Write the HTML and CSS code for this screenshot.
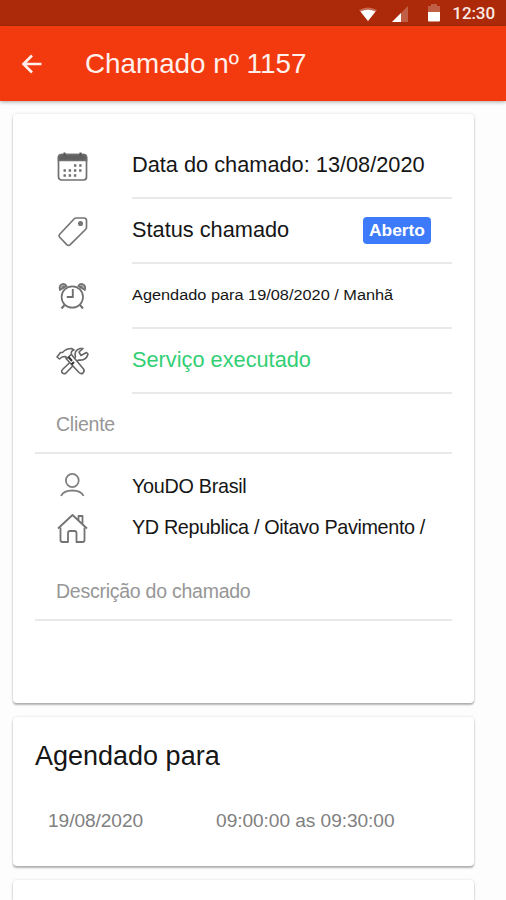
FILE: index.html
```
<!DOCTYPE html>
<html lang="pt-BR">
<head>
    <meta charset="UTF-8">
    <meta name="viewport" content="width=device-width, initial-scale=1.0">
    <title>Chamado nº 1157</title>
    <link rel="stylesheet" href="styles.css">
</head>
<body>
    <!-- Status bar -->
    <div class="status-bar">
        <svg class="wifi" width="20" height="18" viewBox="0 0 20 18">
            <path d="M1 4Q10-1 19 4L10 15Z" fill="#fff" opacity=".3"/>
            <path d="M2.500 5.500Q10 2 17.500 5.500L10 15Z" fill="#fff"/>
        </svg>
        <svg class="signal" width="17" height="18" viewBox="0 0 17 18">
            <path d="M0 16L16 0V16Z" fill="#fff" opacity=".25"/>
            <path d="M0 16L9 7V16Z" fill="#fff"/>
        </svg>
        <svg class="battery" width="12" height="18" viewBox="0 0 12 18">
            <path d="M0 2H3V0H9V2H12V9H0Z" fill="#fff" opacity=".25"/>
            <path d="M0 8H12V16.500Q12 17.500 11 17.500H1Q0 17.500 0 16.500Z" fill="#fff"/>
        </svg>
        <span class="time">12:30</span>
    </div>

    <!-- Header -->
    <header class="toolbar">
        <svg class="back" width="22" height="20" viewBox="0 0 22 20" fill="none" stroke="#ffeee9" stroke-width="2.7">
            <path d="M20.500 10H2.500M11 1.500L2.500 10L11 18.500"/>
        </svg>
        <h1>Chamado nº 1157</h1>
    </header>

    <main class="content">
        <div class="card card-details">
            <div class="item">
                <svg class="icon" width="34" height="34" viewBox="0 0 34 34" fill="none" stroke="#707070" stroke-width="1.7">
                    <rect x="3.500" y="4.500" width="28" height="25.500" rx="3"/>
                    <path d="M3.500 10.500V7.500Q3.500 4.500 6.500 4.500H28.500Q31.500 4.500 31.500 7.500V10.500Z" fill="#606060"/>
                    <path d="M9.500 2.500V6M25.500 2.500V6" stroke="#555" stroke-width="2"/>
                    <path d="M19 15.500H28M8.500 20.500H28M8.500 25.500H23" stroke-width="2.4" stroke-dasharray="2.4 2.800"/>
                </svg>
                <div class="item-inner">Data do chamado: 13/08/2020</div>
            </div>
            <div class="item">
                <svg class="icon" width="34" height="34" viewBox="0 0 34 34" fill="none" stroke="#757575" stroke-width="1.7" stroke-linejoin="round">
                    <path d="M21 3H29Q31.500 3 31.500 5.500V12.500Q31.500 13.500 30.500 14.500L15 29.800Q13.500 31 12 29.800L4.500 22Q3.500 20.500 4.500 19.500L19 4Q20 3 21 3Z"/>
                    <circle cx="25.500" cy="8.500" r="1.7" fill="#777"/>
                </svg>
                <div class="item-inner">Status chamado <span class="badge">Aberto</span></div>
            </div>
            <div class="item">
                <svg class="icon" width="34" height="34" viewBox="0 0 34 34" fill="none" stroke="#707070" stroke-width="1.7">
                    <circle cx="17.300" cy="17" r="10.700"/>
                    <path d="M17.800 9V17H11.800" stroke-width="1.9"/>
                    <path d="M5 10Q3.500 5 7.500 4Q10.500 3.500 11.500 6ZM29.800 10Q31.300 5 27.300 4Q24.300 3.500 23.300 6Z" fill="#aaa"/>
                    <path d="M9.500 25L6.500 28.500M25 25L28 28.500M9.500 8L7.500 6.500M25 8L27 6.500" stroke-width="2"/>
                </svg>
                <div class="item-inner"><span class="small">Agendado para 19/08/2020 / Manhã</span></div>
            </div>
            <div class="item">
                <svg class="icon" width="34" height="34" viewBox="0 0 34 34" fill="none" stroke="#666" stroke-width="1.6" stroke-linejoin="round">
                    <path d="M8 24L20.500 12Q18.500 5.500 25 3.500L28 3.500L24 7L26 10.500L31.500 7.500L33 9Q31.500 16 23.500 15L11 28Q9 29.500 7.500 28Q5.500 26.500 8 24Z"/>
                    <path d="M12 11.500L16 9L28.500 24Q30 26 28 28Q26 29.500 24 27.500L11 13.500Z" fill="#fff"/>
                    <path d="M2 12L5.500 7.500L7.500 7.500Q11 3.500 16.500 3.500L19 5Q15.500 6 16.500 9L12.500 13L10 11.500L7 12L4.500 14Z" fill="#fff"/>
                    <path d="M13.500 12L17 16M16.500 19.500L19 17" stroke="#333" stroke-width="2"/>
                </svg>
                <div class="item-inner success">Serviço executado</div>
            </div>

            <div class="list-header">Cliente</div>
            <div class="client">
                <div class="client-row">
                    <svg class="icon" width="34" height="34" viewBox="0 0 34 34" fill="none" stroke="#808080" stroke-width="1.8">
                        <ellipse cx="17.300" cy="10.500" rx="6.400" ry="6.600"/>
                        <path d="M6 26Q8.500 20.500 17.300 20.500T28.600 26"/>
                    </svg>
                    <span>YouDO Brasil</span>
                </div>
                <div class="client-row">
                    <svg class="icon" width="34" height="34" viewBox="0 0 34 34" fill="none" stroke="#737373" stroke-width="1.8" stroke-linejoin="round">
                        <path d="M3 17.500L17.500 4L32 17.500M23.500 9V5H27.500V13"/>
                        <path d="M5.500 16.500V29Q5.500 31 7.500 31H13V22Q13 20 15 20H19.500Q21.500 20 21.500 22V31H27.500Q29.500 31 29.500 29V16.500"/>
                    </svg>
                    <span class="place">YD Republica / Oitavo Pavimento /</span>
                </div>
            </div>
            <div class="list-header">Descrição do chamado</div>
        </div>

        <div class="card card-schedule">
            <h2>Agendado para</h2>
            <div class="schedule-row">
                <span>19/08/2020</span>
                <span>09:00:00 as 09:30:00</span>
            </div>
        </div>

        <div class="card card-next"></div>
    </main>
</body>
</html>
```

FILE: styles.css
```
/* Base */
* { box-sizing: border-box; margin: 0; padding: 0; }
body { height: 900px; overflow: hidden; display: flex; flex-direction: column; background-color: #fdfdfd; color: #161616; font-family: "Liberation Sans", Arial, sans-serif; }
svg { display: block; flex: none; }

/* Status bar */
.status-bar { height: 26px; flex: none; display: flex; align-items: center; justify-content: flex-end; padding-right: 11px; background-color: #ac2a09; color: #fbe9e4; }
.wifi { margin-right: 14px; margin-top: 4px; }
.signal { margin-right: 19px; margin-top: 4px; }
.battery { margin-right: 12px; }
.time { font: 500 17px/26px Roboto, sans-serif; letter-spacing: -0.1px; }

/* Header */
.toolbar { height: 75px; flex: none; display: flex; align-items: center; padding-left: 21px; background-color: #f23a0e; box-shadow: 0 1px 4px rgba(0, 0, 0, 0.35); z-index: 1; }
.toolbar h1 { margin-left: 42px; color: #fff0ec; font-size: 27.8px; font-weight: normal; }

/* Cards */
.content { flex: 1; width: 474px; padding: 13px 0 0 13px; display: flex; flex-direction: column; }
.card { flex: none; margin-bottom: 14px; background-color: #fff; border-radius: 4px; box-shadow: 0 2px 2px rgba(0, 0, 0, 0.28), 0 0 3px rgba(0, 0, 0, 0.12); }
.card-details { height: 589px; padding: 20px 22px 0; }
.card-schedule { height: 149px; padding: 22px 22px 0; }
.card-next { flex: 1; margin-bottom: 0; border-radius: 4px 4px 0 0; }

/* Items */
.item { height: 65px; display: flex; align-items: center; padding-left: 20px; font-size: 21.75px; }
.item .icon { margin-right: 43px; }
.item-inner { flex: 1; height: 65px; display: flex; align-items: center; justify-content: space-between; padding: 0 21px 1px 0; border-bottom: 2px solid #e9e9e9; white-space: nowrap; }
.badge { height: 27px; padding: 0 6px; border-radius: 4px; background-color: #3d7bfa; color: #fff; font-size: 17.4px; font-weight: bold; line-height: 27px; }
.small { font-size: 14px; transform: scaleX(1.165); transform-origin: left; }
.success { color: #32cf75; }

.list-header { height: 60px; padding-left: 21px; border-bottom: 2px solid #e9e9e9; color: #969696; font-size: 19.5px; line-height: 61px; letter-spacing: -0.25px; }

/* Client rows */
.client { height: 107px; padding-top: 12px; }
.client-row { height: 41px; display: flex; align-items: center; padding-left: 20px; font-size: 19.8px; letter-spacing: -0.3px; white-space: nowrap; }
.client-row .icon { margin-right: 43px; }
.place { letter-spacing: -0.35px; }

/* Schedule */
.card-schedule h2 { font-size: 27px; font-weight: normal; line-height: 34px; }
.schedule-row { display: flex; gap: 73px; margin-top: 36px; padding-left: 13px; color: #808080; font-size: 19.1px; line-height: 24px; letter-spacing: -0.05px; }
```
